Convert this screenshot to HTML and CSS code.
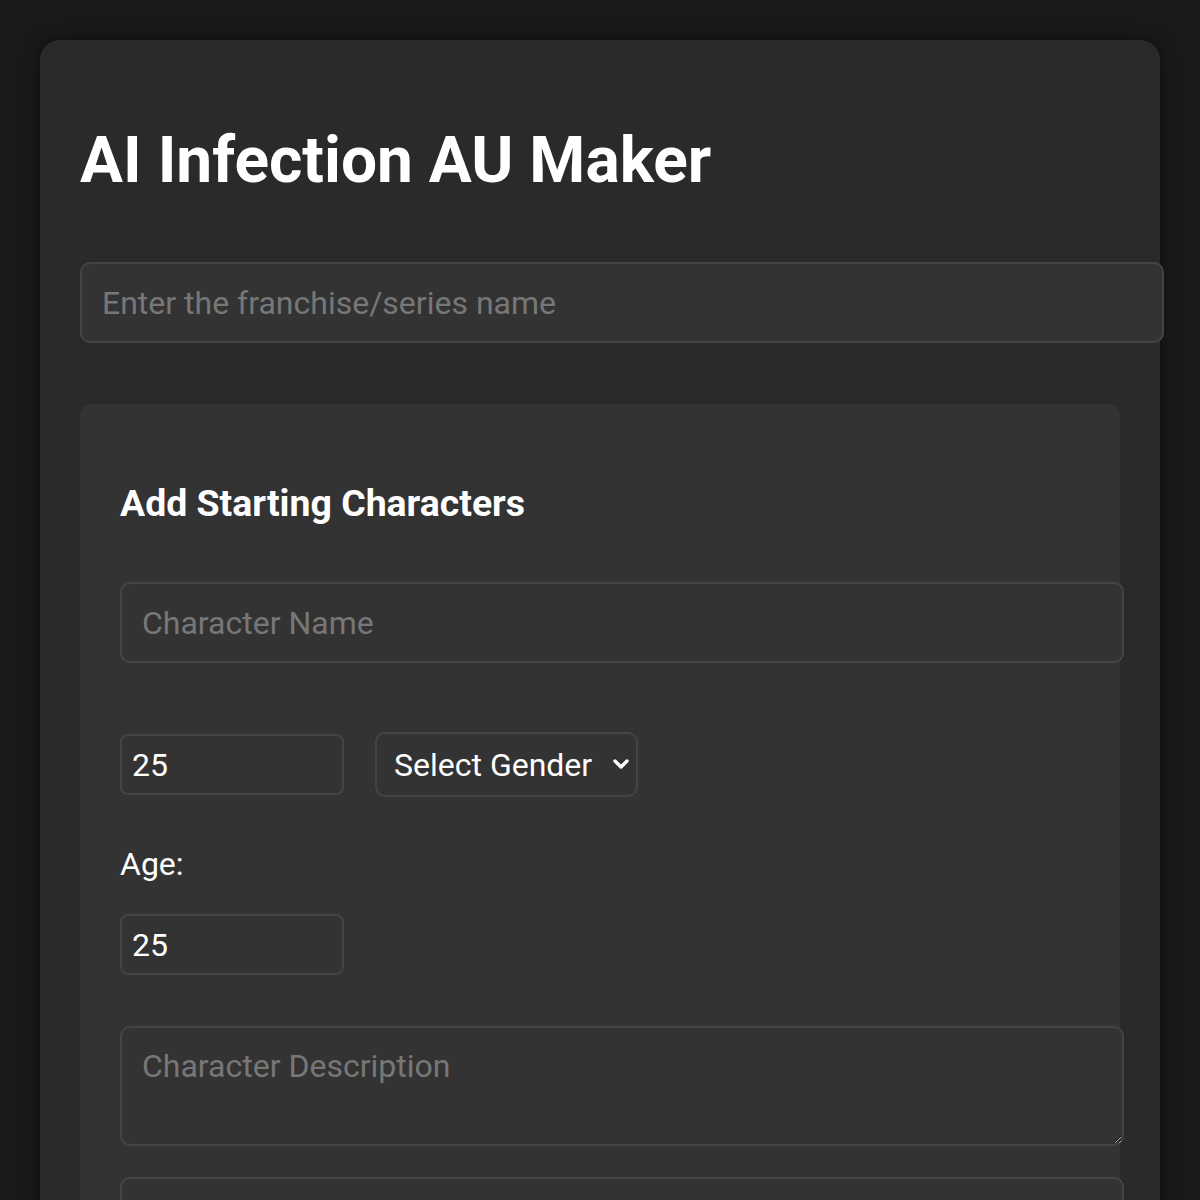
FILE: index.html
```html
<!DOCTYPE html>
<html lang="en">
<head>
    <meta charset="UTF-8">
    <meta name="viewport" content="width=device-width, initial-scale=1.0">
    <title>AI Infection AU Maker</title>
    <link rel="stylesheet" href="styles.css">
</head>
<body>

    <div class="container">

        <h1 class="title">AI Infection AU Maker</h1>

        <input type="text" class="field series" placeholder="Enter the franchise/series name">

        <div class="card">

            <h3 class="card-title">Add Starting Characters</h3>

            <input type="text" class="field wide" placeholder="Character Name">

            <div class="row">
                <input type="number" class="field small" value="25">
                <span class="select-wrap">
                    <select class="field gender">
                        <option>Select Gender</option>
                        <option>Male</option>
                        <option>Female</option>
                        <option>Other</option>
                    </select>
                    <!-- chevron drawn over the select -->
                    <svg class="chevron" width="16" height="10" viewBox="0 0 16 10">
                        <path d="M2 2 L8 8 L14 2" fill="none" stroke="#ffffff" stroke-width="3.4" stroke-linecap="round" stroke-linejoin="round"/>
                    </svg>
                </span>
            </div>

            <label class="label">Age:</label>
            <input type="number" class="field small age" value="25">

            <textarea class="field wide desc" placeholder="Character Description"></textarea>

            <input type="text" class="field wide" placeholder="Infection Traits">

        </div>

    </div>

</body>
</html>
```

FILE: styles.css
```css
* {
    margin: 0;
    padding: 0;
    font-family: Roboto, "Liberation Sans", sans-serif;
}

html {
    color-scheme: dark;
}

body {
    background-color: #1a1a1a;
    padding: 40px;
    color: #ffffff;
    overflow: hidden;
}

.container {
    background-color: #2a2a2a;
    border-radius: 20px;
    padding: 40px;
    box-shadow: 0 0 20px rgba(0, 0, 0, 0.5);
    display: flex;
    flex-direction: column;
    align-items: flex-start;
    min-height: 1200px;
}

.title {
    font-size: 64px;
    font-weight: 700;
    margin: 43px 0 43px;
}

.field {
    background-color: #333333;
    border: 2px solid #444444;
    border-radius: 10px;
    color: #ffffff;
    font-size: 32px;
    outline: none;
}

.field::placeholder {
    color: #777777;
}

.series {
    width: 100%;
    box-sizing: content-box;
    padding: 0 20px;
    height: 77px;
    margin-top: 21px;
}

.card {
    background-color: #333333;
    border-radius: 12px;
    padding: 40px;
    margin-top: 61px;
    align-self: stretch;
    display: flex;
    flex-direction: column;
    align-items: flex-start;
}

.card-title {
    font-size: 37.44px;
    font-weight: 700;
    margin: 37px 0;
}

.wide {
    width: 100%;
    box-sizing: content-box;
    padding: 0 20px;
    height: 77px;
    margin-top: 20px;
}

.row {
    display: flex;
    align-items: center;
    gap: 31px;
    margin-top: 69px;
}

.small {
    width: 224px;
    height: 61px;
    box-sizing: border-box;
    padding: 0 10px;
    border-radius: 8px;
}

.select-wrap {
    position: relative;
    display: flex;
}

.gender {
    appearance: none;
    width: 263px;
    height: 65px;
    padding: 0 40px 0 17px;
    border-radius: 10px;
}

.chevron {
    position: absolute;
    right: 9px;
    top: 27px;
    pointer-events: none;
}

.label {
    font-size: 32px;
    margin-top: 48px;
}

.age {
    margin-top: 31px;
}

.desc {
    height: 76px;
    padding: 20px;
    margin-top: 51px;
    resize: vertical;
    line-height: 1.17;
}

.desc + .wide {
    margin-top: 31px;
}
```
